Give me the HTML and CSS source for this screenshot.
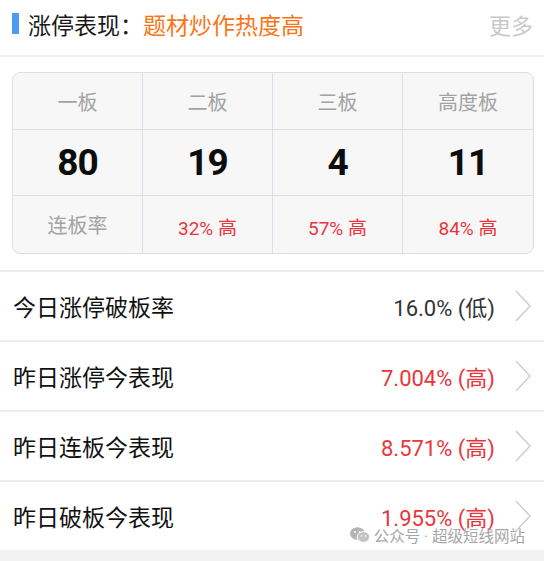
FILE: index.html
```html
<!DOCTYPE html>
<html>
<head>
    <meta charset="UTF-8">
    <title>涨停表现</title>
    <link rel="stylesheet" href="styles.css">
</head>
<body>
    <div class="page">
        <div class="head">
            <span class="head-bar"></span>
            <span class="head-title">涨停表现：</span>
            <span class="head-theme">题材炒作热度高</span>
            <span class="head-more">更多</span>
        </div>

        <div class="board">
            <div class="cell label">一板</div>
            <div class="cell label">二板</div>
            <div class="cell label">三板</div>
            <div class="cell label">高度板</div>

            <div class="cell num">80</div>
            <div class="cell num">19</div>
            <div class="cell num">4</div>
            <div class="cell num">11</div>

            <div class="cell label">连板率</div>
            <div class="cell rate">32% 高</div>
            <div class="cell rate">57% 高</div>
            <div class="cell rate">84% 高</div>
        </div>

        <div class="list">
            <div class="row">
                <span class="row-name">今日涨停破板率</span>
                <span class="row-value">16.0% (低)</span>
                <svg class="chevron" width="16" height="32" viewBox="0 0 16 32"><path d="M1 1 L15 16 L1 31" fill="none" stroke="#cccccc" stroke-width="1.4"/></svg>
            </div>
            <div class="row">
                <span class="row-name">昨日涨停今表现</span>
                <span class="row-value up">7.004% (高)</span>
                <svg class="chevron" width="16" height="32" viewBox="0 0 16 32"><path d="M1 1 L15 16 L1 31" fill="none" stroke="#cccccc" stroke-width="1.4"/></svg>
            </div>
            <div class="row">
                <span class="row-name">昨日连板今表现</span>
                <span class="row-value up">8.571% (高)</span>
                <svg class="chevron" width="16" height="32" viewBox="0 0 16 32"><path d="M1 1 L15 16 L1 31" fill="none" stroke="#cccccc" stroke-width="1.4"/></svg>
            </div>
            <div class="row">
                <span class="row-name">昨日破板今表现</span>
                <span class="row-value up">1.955% (高)</span>
                <svg class="chevron" width="16" height="32" viewBox="0 0 16 32"><path d="M1 1 L15 16 L1 31" fill="none" stroke="#cccccc" stroke-width="1.4"/></svg>
                <!-- 水印 -->
                <div class="mark">
                    <svg width="20" height="16" viewBox="0 0 20 16">
                        <ellipse cx="7.5" cy="6.5" rx="7.5" ry="6.3" fill="#b4b4b4"/>
                        <ellipse cx="13.5" cy="10" rx="6.3" ry="5.4" fill="#c4c4c4" stroke="#ffffff" stroke-width="1"/>
                        <circle cx="5" cy="5" r="1" fill="#ffffff"/>
                        <circle cx="9.6" cy="5" r="1" fill="#ffffff"/>
                        <circle cx="11.5" cy="9" r="0.8" fill="#ffffff"/>
                        <circle cx="15.5" cy="9" r="0.8" fill="#ffffff"/>
                    </svg>
                    <span>公众号 · 超级短线网站</span>
                </div>
            </div>
        </div>
    </div>
</body>
</html>
```

FILE: styles.css
```css
html, body {
    margin: 0;
    padding: 0;
}
body {
    background-color: #f2f2f2;
    font-family: Roboto, "Noto Sans CJK SC", sans-serif;
    color: #111;
}
.page {
    width: 544px;
    background-color: #fff;
}

/* 标题栏 */
.head {
    display: flex;
    align-items: center;
    height: 47px;
    padding: 0 11px 8px 12px;
    border-bottom: 2px solid #f2f2f2;
    font-size: 23px;
}
.head-bar {
    width: 7px;
    height: 21px;
    background-color: #4b9bf8;
    margin-right: 9px;
}
.head-title {
    color: #1a1a1a;
}
.head-theme {
    color: #fa7517;
}
.head-more {
    margin-left: auto;
    color: #c9c9c9;
    font-size: 22px;
}

/* 连板统计表 */
.board {
    display: grid;
    grid-template-columns: repeat(4, 1fr);
    grid-template-rows: 57px 66px 57px;
    margin: 15px 10px 16px 12px;
    border: 1px solid #dcdde9;
    border-radius: 8px;
    background-color: #f7f7f8;
    overflow: hidden;
}
.cell {
    display: flex;
    align-items: center;
    justify-content: center;
    border-right: 1px solid #dcdde9;
    border-bottom: 1px solid #dcdde9;
}
.cell:nth-child(4n) {
    border-right: none;
}
.cell:nth-child(n+9) {
    border-bottom: none;
}
.label {
    color: #a3a3a3;
    font-size: 20px;
}
.num {
    font-family: Roboto, sans-serif;
    font-weight: bold;
    font-size: 37px;
    letter-spacing: -1px;
    color: #0d0d0d;
}
.rate {
    color: #e8363b;
    font-size: 19px;
    padding-top: 3px;
}

/* 列表 */
.row {
    position: relative;
    display: flex;
    align-items: center;
    height: 68px;
    padding: 0 13px 0 13px;
    border-top: 2px solid #ededed;
}
.row-name {
    font-size: 23px;
    color: #111;
}
.row-value {
    margin-left: auto;
    font-size: 22px;
    color: #333;
}
.row-value.up {
    color: #e8363b;
}
.chevron {
    margin-left: 20px;
}
.mark {
    position: absolute;
    right: 19px;
    bottom: 4px;
    display: flex;
    align-items: center;
    gap: 4px;
    font-size: 15.5px;
    color: #a6a6a6;
}
```
